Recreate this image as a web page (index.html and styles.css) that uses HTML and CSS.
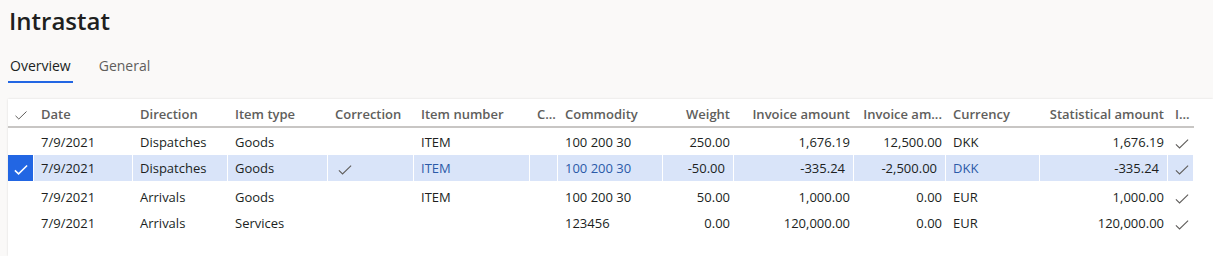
FILE: index.html
```html
<!DOCTYPE html>
<html lang="en">
<head>
    <meta charset="UTF-8">
    <title>Intrastat</title>
    <link rel="stylesheet" href="styles.css">
</head>
<body>
    <header class="page-head">
        <h1>Intrastat</h1>
        <nav class="tabs">
            <span class="tab active">Overview</span>
            <span class="tab">General</span>
        </nav>
    </header>
    <div class="card">
        <table class="grid">
            <colgroup>
                <col style="width:26px"><col style="width:99px"><col style="width:95px"><col style="width:100px">
                <col style="width:86px"><col style="width:116px"><col style="width:28px"><col style="width:105px">
                <col style="width:71px"><col style="width:120px"><col style="width:92px"><col style="width:94px">
                <col style="width:128px"><col style="width:26px">
            </colgroup>
            <thead>
                <tr>
                    <th class="sel"><svg class="chk" viewBox="0 0 12 9"><path d="M0.5 4.8 L3.8 8 L11.5 0.5"/></svg></th>
                    <th>Date</th>
                    <th>Direction</th>
                    <th>Item type</th>
                    <th>Correction</th>
                    <th>Item number</th>
                    <th>C...</th>
                    <th>Commodity</th>
                    <th class="num">Weight</th>
                    <th class="num">Invoice amount</th>
                    <th class="num">Invoice am...</th>
                    <th>Currency</th>
                    <th class="num">Statistical amount</th>
                    <th>I...</th>
                </tr>
            </thead>
            <tbody>
                <tr class="first">
                    <td class="sel"></td>
                    <td>7/9/2021</td>
                    <td>Dispatches</td>
                    <td>Goods</td>
                    <td></td>
                    <td>ITEM</td>
                    <td></td>
                    <td>100 200 30</td>
                    <td class="num">250.00</td>
                    <td class="num">1,676.19</td>
                    <td class="num">12,500.00</td>
                    <td>DKK</td>
                    <td class="num">1,676.19</td>
                    <td><svg class="chk" viewBox="0 0 12 9"><path d="M0.5 4.8 L3.8 8 L11.5 0.5"/></svg></td>
                </tr>
                <tr class="selected">
                    <td class="sel"><svg class="chk" viewBox="0 0 12 9"><path d="M0.5 4.8 L3.8 8 L11.5 0.5"/></svg></td>
                    <td>7/9/2021</td>
                    <td>Dispatches</td>
                    <td>Goods</td>
                    <td class="flag"><svg class="chk" viewBox="0 0 12 9"><path d="M0.5 4.8 L3.8 8 L11.5 0.5"/></svg></td>
                    <td class="link">ITEM</td>
                    <td></td>
                    <td class="link">100 200 30</td>
                    <td class="num">-50.00</td>
                    <td class="num">-335.24</td>
                    <td class="num">-2,500.00</td>
                    <td class="link">DKK</td>
                    <td class="num">-335.24</td>
                    <td><svg class="chk" viewBox="0 0 12 9"><path d="M0.5 4.8 L3.8 8 L11.5 0.5"/></svg></td>
                </tr>
                <tr class="gap">
                    <td class="sel"></td>
                    <td>7/9/2021</td>
                    <td>Arrivals</td>
                    <td>Goods</td>
                    <td></td>
                    <td>ITEM</td>
                    <td></td>
                    <td>100 200 30</td>
                    <td class="num">50.00</td>
                    <td class="num">1,000.00</td>
                    <td class="num">0.00</td>
                    <td>EUR</td>
                    <td class="num">1,000.00</td>
                    <td><svg class="chk" viewBox="0 0 12 9"><path d="M0.5 4.8 L3.8 8 L11.5 0.5"/></svg></td>
                </tr>
                <tr>
                    <td class="sel"></td>
                    <td>7/9/2021</td>
                    <td>Arrivals</td>
                    <td>Services</td>
                    <td></td>
                    <td></td>
                    <td></td>
                    <td>123456</td>
                    <td class="num">0.00</td>
                    <td class="num">120,000.00</td>
                    <td class="num">0.00</td>
                    <td>EUR</td>
                    <td class="num">120,000.00</td>
                    <td><svg class="chk" viewBox="0 0 12 9"><path d="M0.5 4.8 L3.8 8 L11.5 0.5"/></svg></td>
                </tr>
            </tbody>
        </table>
    </div>
</body>
</html>
```

FILE: styles.css
```css
body {
    font-family: "Segoe UI", "Open Sans", sans-serif;
    background-color: #faf9f8;
    color: #201f1e;
    margin: 0;
    padding: 0;
    font-size: 14px;
}
.page-head {
    padding: 0 8px;
    height: 99px;
}
.page-head h1 {
    margin: 0;
    padding-top: 3px;
    font-size: 24px;
    font-weight: 600;
    line-height: 36px;
    padding-left: 1px;
}
.tabs {
    display: flex;
    gap: 24px;
    margin-top: 17px;
}
.tab {
    color: #605e5c;
    line-height: 20px;
    padding: 0 2px 5px 2px;
    border-bottom: 2px solid transparent;
}
.tab.active {
    color: #201f1e;
    border-bottom-color: #2266e3;
}
.card {
    background: #fff;
    margin-left: 8px;
    height: 157px;
    box-shadow: 0 0 2px rgba(0, 0, 0, 0.12);
}
.grid {
    border-collapse: separate;
    border-spacing: 0;
    table-layout: fixed;
    width: 1186px;
    font-size: 13px;
}
.grid th {
    text-align: left;
    font-weight: 600;
    color: #605e5c;
    height: 25px;
    padding: 2px 0 0 7px;
    border-bottom: 2px solid #c8c6c4;
    white-space: nowrap;
    overflow: hidden;
}
.grid td {
    height: 26px;
    padding: 0 0 0 7px;
    white-space: nowrap;
    overflow: hidden;
}
.grid th.num,
.grid td.num {
    text-align: right;
    padding-left: 0;
    padding-right: 4px;
}
.grid tr.first td {
    height: 26px;
    padding-top: 1px;
}
.grid .sel {
    padding-left: 0;
    padding-right: 0;
    text-align: center;
}
.chk {
    width: 12px;
    height: 9px;
    display: inline-block;
    vertical-align: middle;
}
.chk path {
    fill: none;
    stroke: #605e5c;
    stroke-width: 1;
}
.grid td .chk {
    width: 14px;
    height: 10px;
}
.grid tr.selected td {
    background: #d9e4f9;
    border-right: 1px solid #fff;
}
.grid tr.selected td.num {
    padding-right: 8px;
}
.grid tr.selected td.sel {
    background: #2266e3;
}
.grid tr.selected td.sel .chk path {
    stroke: #fff;
    stroke-width: 1.4;
}
.grid td.flag {
    padding-left: 10px;
}
.grid td.link {
    color: #2b5aa8;
}
.grid tr.gap td {
    padding-top: 3px;
}
```
